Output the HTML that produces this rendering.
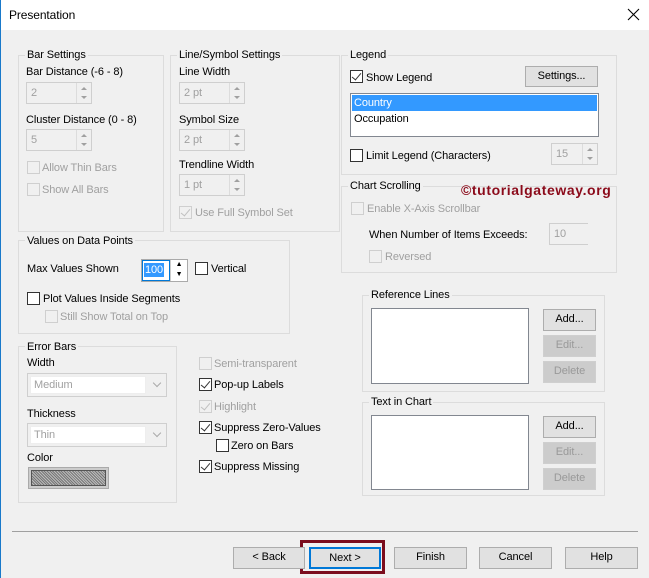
<!DOCTYPE html>
<html><head><style>
*{box-sizing:border-box;margin:0;padding:0}
body{width:649px;height:578px;background:#f0f0f0;font-family:"Liberation Sans",sans-serif;font-size:11px;letter-spacing:-0.1px;color:#000;position:relative;overflow:hidden}
.a{position:absolute;white-space:nowrap}
.t{position:absolute;white-space:nowrap;line-height:14px}
.g{position:absolute;border:1px solid #dcdcdc}
.gl{position:absolute;background:#f0f0f0;padding:0 2px;line-height:14px;white-space:nowrap}
.dis{color:#a0a0a0}
.spin{position:absolute;border:1px solid #cfcfcf;background:#f0f0f0;color:#a0a0a0;padding:2px 4px;line-height:16px}
.spin i{position:absolute;right:0;top:0;bottom:0;width:15px;border-left:1px solid #dcdcdc}
.spin i:before,.spin i:after{content:"";position:absolute;left:4px;border-left:3px solid transparent;border-right:3px solid transparent}
.spin i:before{top:4px;border-bottom:3px solid #a0a0a0}
.spin i:after{bottom:4px;border-top:3px solid #a0a0a0}
.cb{position:absolute;width:13px;height:13px;border:1px solid #333;background:#fff}
.cb.d{border-color:#cfcfcf;background:#f0f0f0}
.cb.c:after{content:"";position:absolute;left:3px;top:0px;width:4px;height:8px;border:solid #333;border-width:0 1.5px 1.5px 0;transform:rotate(40deg)}
.cb.d.c:after{border-color:#c0c0c0}
.btn{position:absolute;border:1px solid #adadad;background:#e1e1e1;text-align:center;line-height:19px}
.btn.d{border-color:#cfcfcf;background:#ccc;color:#999}
.lb{position:absolute;background:#fff;border:1px solid #828790}
.cmb{position:absolute;border:1px solid #cfcfcf;background:#f0f0f0;color:#a0a0a0}
.cmb span{position:absolute;left:2px;top:2px;right:20px;bottom:2px;background:#fff;border:1px solid #eee;padding-left:3px;line-height:16px}
.cmb b{position:absolute;right:6px;top:6px;width:6px;height:6px;border:solid #aaa;border-width:0 1px 1px 0;transform:rotate(45deg)}
</style></head><body>
<div class="a" style="left:0;top:0;width:649px;height:30px;background:#fff"></div>
<div class="a" style="left:0;top:0;width:1px;height:578px;background:#1979ca"></div>
<div class="t" style="left:9px;top:8px;font-size:12px">Presentation</div>
<svg class="a" style="left:627px;top:8px" width="13" height="13"><path d="M1 1L12 12M12 1L1 12" stroke="#000" stroke-width="1.1"/></svg>

<div class="g" style="left:18px;top:55px;width:146px;height:177px"></div>
<div class="gl" style="left:25px;top:48px">Bar Settings</div>
<div class="t" style="left:26px;top:65px">Bar Distance (-6 - 8)</div>
<div class="spin" style="left:26px;top:82px;width:66px;height:22px">2<i></i></div>
<div class="t" style="left:26px;top:113px">Cluster Distance (0 - 8)</div>
<div class="spin" style="left:26px;top:129px;width:66px;height:22px">5<i></i></div>
<div class="cb d" style="left:27px;top:161px"></div><div class="t dis" style="left:42px;top:161px">Allow Thin Bars</div>
<div class="cb d" style="left:27px;top:183px"></div><div class="t dis" style="left:42px;top:183px">Show All Bars</div>

<div class="g" style="left:170px;top:55px;width:170px;height:177px"></div>
<div class="gl" style="left:177px;top:48px">Line/Symbol Settings</div>
<div class="t" style="left:179px;top:65px">Line Width</div>
<div class="spin" style="left:179px;top:82px;width:66px;height:22px">2 pt<i></i></div>
<div class="t" style="left:179px;top:113px">Symbol Size</div>
<div class="spin" style="left:179px;top:129px;width:66px;height:22px">2 pt<i></i></div>
<div class="t" style="left:179px;top:158px">Trendline Width</div>
<div class="spin" style="left:179px;top:174px;width:66px;height:22px">1 pt<i></i></div>
<div class="cb d c" style="left:179px;top:206px"></div><div class="t dis" style="left:195px;top:206px">Use Full Symbol Set</div>

<div class="g" style="left:18px;top:240px;width:272px;height:94px"></div>
<div class="gl" style="left:25px;top:234px">Values on Data Points</div>
<div class="t" style="left:27px;top:262px">Max Values Shown</div>
<div class="a" style="left:141px;top:259px;width:47px;height:23px;border:1px solid #aaa;background:#fff"></div>
<div class="a" style="left:142px;top:260px;width:28px;height:21px;border:1px solid #0078d7"></div>
<div class="a" style="left:144px;top:263px;background:#3399ff;color:#fff;line-height:14px;padding:0 1px">100</div>
<div class="a" style="left:170px;top:260px;width:17px;height:21px;border-left:1px solid #ccc;font-size:7px;line-height:10px;text-align:center">▲<br>▼</div>
<div class="cb" style="left:195px;top:262px"></div><div class="t" style="left:211px;top:262px">Vertical</div>
<div class="cb" style="left:27px;top:292px"></div><div class="t" style="left:43px;top:292px">Plot Values Inside Segments</div>
<div class="cb d" style="left:45px;top:310px"></div><div class="t dis" style="left:60px;top:310px">Still Show Total on Top</div>

<div class="g" style="left:341px;top:55px;width:276px;height:120px"></div>
<div class="gl" style="left:348px;top:48px">Legend</div>
<div class="cb c" style="left:350px;top:70px"></div><div class="t" style="left:366px;top:71px">Show Legend</div>
<div class="btn" style="left:525px;top:66px;width:73px;height:21px">Settings...</div>
<div class="lb" style="left:350px;top:93px;width:249px;height:44px"></div>
<div class="a" style="left:352px;top:95px;width:245px;height:16px;background:#3399ff"></div>
<div class="t" style="left:354px;top:96px;color:#fff">Country</div>
<div class="t" style="left:354px;top:112px">Occupation</div>
<div class="cb" style="left:350px;top:149px"></div><div class="t" style="left:366px;top:149px">Limit Legend (Characters)</div>
<div class="spin" style="left:551px;top:143px;width:47px;height:22px">15<i></i></div>

<div class="g" style="left:341px;top:186px;width:276px;height:87px"></div>
<div class="gl" style="left:348px;top:179px">Chart Scrolling</div>
<div class="t" style="left:461px;top:183px;color:#8b0a1a;font-weight:bold;font-size:14px;letter-spacing:0.6px">©tutorialgateway.org</div>
<div class="cb d" style="left:351px;top:202px"></div><div class="t dis" style="left:367px;top:202px">Enable X-Axis Scrollbar</div>
<div class="t" style="left:369px;top:228px">When Number of Items Exceeds:</div>
<div class="spin" style="left:549px;top:223px;width:39px;height:22px;border-right:none">10</div>
<div class="cb d" style="left:369px;top:250px"></div><div class="t dis" style="left:385px;top:250px">Reversed</div>

<div class="g" style="left:362px;top:295px;width:243px;height:97px"></div>
<div class="gl" style="left:369px;top:288px">Reference Lines</div>
<div class="lb" style="left:371px;top:308px;width:158px;height:76px"></div>
<div class="btn" style="left:543px;top:309px;width:53px;height:22px">Add...</div>
<div class="btn d" style="left:543px;top:335px;width:53px;height:22px">Edit...</div>
<div class="btn d" style="left:543px;top:361px;width:53px;height:22px">Delete</div>

<div class="g" style="left:362px;top:402px;width:243px;height:94px"></div>
<div class="gl" style="left:369px;top:395px">Text in Chart</div>
<div class="lb" style="left:371px;top:415px;width:158px;height:75px"></div>
<div class="btn" style="left:543px;top:416px;width:53px;height:22px">Add...</div>
<div class="btn d" style="left:543px;top:442px;width:53px;height:22px">Edit...</div>
<div class="btn d" style="left:543px;top:468px;width:53px;height:22px">Delete</div>

<div class="g" style="left:18px;top:346px;width:159px;height:157px"></div>
<div class="gl" style="left:25px;top:340px">Error Bars</div>
<div class="t" style="left:27px;top:356px">Width</div>
<div class="cmb" style="left:27px;top:373px;width:140px;height:24px"><span>Medium</span><b></b></div>
<div class="t" style="left:27px;top:407px">Thickness</div>
<div class="cmb" style="left:27px;top:423px;width:140px;height:24px"><span>Thin</span><b></b></div>
<div class="t" style="left:27px;top:451px">Color</div>
<div class="a" style="left:28px;top:467px;width:81px;height:22px;background:#ccc;border:1px solid #aaa"></div>
<div class="a" style="left:31px;top:470px;width:75px;height:16px;border:1px solid #555;background-color:#999;background-image:repeating-linear-gradient(45deg,#777 0 1px,#bbb 1px 2px)"></div>

<div class="cb d" style="left:199px;top:357px"></div><div class="t dis" style="left:214px;top:357px">Semi-transparent</div>
<div class="cb c" style="left:199px;top:378px"></div><div class="t" style="left:214px;top:378px">Pop-up Labels</div>
<div class="cb d c" style="left:199px;top:400px"></div><div class="t dis" style="left:214px;top:400px">Highlight</div>
<div class="cb c" style="left:199px;top:421px"></div><div class="t" style="left:214px;top:421px">Suppress Zero-Values</div>
<div class="cb" style="left:216px;top:439px"></div><div class="t" style="left:231px;top:439px">Zero on Bars</div>
<div class="cb c" style="left:199px;top:460px"></div><div class="t" style="left:214px;top:460px">Suppress Missing</div>

<div class="a" style="left:12px;top:531px;width:626px;height:1px;background:#a0a0a0"></div>
<div class="a" style="left:300px;top:540px;width:85px;height:34px;border:3px solid #7b0d1e"></div>
<div class="btn" style="left:233px;top:547px;width:72px;height:22px">&lt; Back</div>
<div class="btn" style="left:309px;top:547px;width:72px;height:22px;border:2px solid #0078d7;line-height:18px">Next &gt;</div>
<div class="btn" style="left:394px;top:547px;width:73px;height:22px">Finish</div>
<div class="btn" style="left:479px;top:547px;width:73px;height:22px">Cancel</div>
<div class="btn" style="left:565px;top:547px;width:73px;height:22px">Help</div>
</body></html>
